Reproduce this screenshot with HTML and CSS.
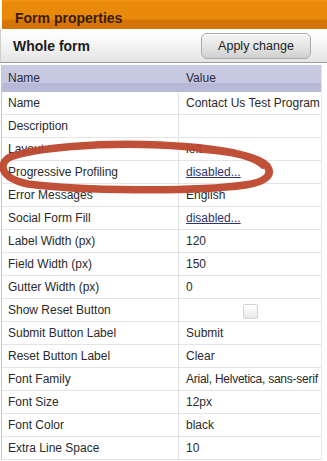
FILE: index.html
```html
<!DOCTYPE html>
<html>
<head>
<meta charset="utf-8">
<link rel="stylesheet" href="styles.css">
</head>
<body>
<div class="page">
  <div class="panel-title">Form properties</div>
  <div class="toolbar">
    <span class="toolbar-label">Whole form</span>
    <button class="apply-btn">Apply change</button>
  </div>
  <div class="grid">
    <div class="row head"><div class="c-name">Name</div><div class="c-val">Value</div></div>
    <div class="row"><div class="c-name">Name</div><div class="c-val">Contact Us Test Program</div></div>
    <div class="row"><div class="c-name">Description</div><div class="c-val"></div></div>
    <div class="row"><div class="c-name">Layout</div><div class="c-val">left</div></div>
    <div class="row"><div class="c-name">Progressive Profiling</div><div class="c-val"><a class="link">disabled...</a></div></div>
    <div class="row"><div class="c-name">Error Messages</div><div class="c-val">English</div></div>
    <div class="row"><div class="c-name">Social Form Fill</div><div class="c-val"><a class="link">disabled...</a></div></div>
    <div class="row"><div class="c-name">Label Width (px)</div><div class="c-val">120</div></div>
    <div class="row"><div class="c-name">Field Width (px)</div><div class="c-val">150</div></div>
    <div class="row"><div class="c-name">Gutter Width (px)</div><div class="c-val">0</div></div>
    <div class="row"><div class="c-name">Show Reset Button</div><div class="c-val center"><span class="check"></span></div></div>
    <div class="row"><div class="c-name">Submit Button Label</div><div class="c-val">Submit</div></div>
    <div class="row"><div class="c-name">Reset Button Label</div><div class="c-val">Clear</div></div>
    <div class="row"><div class="c-name">Font Family</div><div class="c-val narrow">Arial, Helvetica, sans-serif</div></div>
    <div class="row"><div class="c-name">Font Size</div><div class="c-val">12px</div></div>
    <div class="row"><div class="c-name">Font Color</div><div class="c-val">black</div></div>
    <div class="row"><div class="c-name">Extra Line Space</div><div class="c-val">10</div></div>
  </div>
  <svg class="scribble" width="327" height="461" viewBox="0 0 327 461">
    <path d="M 263 165 C 250 153 215 148 160 145 C 100 142 35 148 10 157 C -2 164 0 178 28 184 C 80 191 195 192 245 185 C 267 182 273 174 267 166 C 259 157 230 151 200 149" />
  </svg>
</div>
</body>
</html>
```

FILE: styles.css
```css
html, body {
  margin: 0;
  padding: 0;
  background: #ffffff;
}
.page {
  position: relative;
  width: 327px;
  height: 461px;
  overflow: hidden;
  font-family: "Liberation Sans", Arial, sans-serif;
}
.panel-title {
  height: 29px;
  box-sizing: border-box;
  margin-left: 2px;
  padding-left: 13px;
  padding-top: 10px;
  font-size: 14px;
  line-height: 16px;
  font-weight: bold;
  color: #3a1c04;
  background: linear-gradient(#f19a1c 0, #ea8a0b 8%, #e98909 66%, #d57407 70%, #d47406 100%);
}
.toolbar {
  height: 34px;
  box-sizing: border-box;
  display: flex;
  align-items: center;
  justify-content: space-between;
  padding-left: 12px;
  padding-right: 16px;
  border-left: 1px solid #cfcfcf;
  border-bottom: 1px solid #9a9a9a;
  background: linear-gradient(#ffffff 0, #f7f7f7 40%, #e3e3e3 100%);
}
.toolbar-label {
  font-size: 14px;
  font-weight: bold;
  color: #1b1b1b;
}
.apply-btn {
  width: 110px;
  height: 26px;
  margin-top: 1px;
  border: 1px solid #a9a9a9;
  border-radius: 6px;
  background: linear-gradient(#f6f6f6 0, #e6e6e6 50%, #cfcfcf 100%);
  font-family: "Liberation Sans", Arial, sans-serif;
  font-size: 12.5px;
  color: #222;
  padding: 0;
  box-shadow: inset 0 1px 0 #ffffff;
}
.grid {
  margin-top: 2px;
  width: 319px;
  border-left: 1px solid #c9c9c9;
  border-right: 1px solid #e6e6e6;
  margin-left: 1px;
}
.row {
  display: flex;
  height: 23px;
  box-sizing: border-box;
  border-bottom: 1px solid #e4e4e4;
  font-size: 12px;
  color: #2a2a2a;
  line-height: 22px;
}
.row.head {
  height: 27px;
  line-height: 26px;
  border-bottom: none;
  background: linear-gradient(#c9cbe3 0, #c6c8e1 65%, #b7b9d7 66%, #b7b9d7 100%);
  color: #2a2a3a;
}
.c-name {
  width: 177px;
  box-sizing: border-box;
  padding-left: 6px;
  border-right: 1px solid #e4e4e4;
  white-space: nowrap;
  overflow: hidden;
}
.row.head .c-name {
  border-right: none;
}
.c-val {
  flex: 1;
  padding-left: 7px;
  white-space: nowrap;
  overflow: hidden;
}
.c-val.narrow {
  letter-spacing: -0.25px;
}
.c-val.center {
  display: flex;
  align-items: center;
  justify-content: center;
  padding-left: 0;
}
.link {
  color: #2b3372;
  text-decoration: underline;
}
.check {
  display: block;
  width: 13px;
  height: 13px;
  margin-top: 2px;
  border: 1px solid #d4d4d4;
  border-radius: 2px;
  background: linear-gradient(#ffffff, #e8e8e8);
}
.scribble {
  position: absolute;
  left: 0;
  top: 0;
  pointer-events: none;
}
.scribble path {
  fill: none;
  stroke: #bd472d;
  stroke-width: 7.5;
  stroke-linecap: round;
  stroke-linejoin: round;
  opacity: 0.95;
}
```
